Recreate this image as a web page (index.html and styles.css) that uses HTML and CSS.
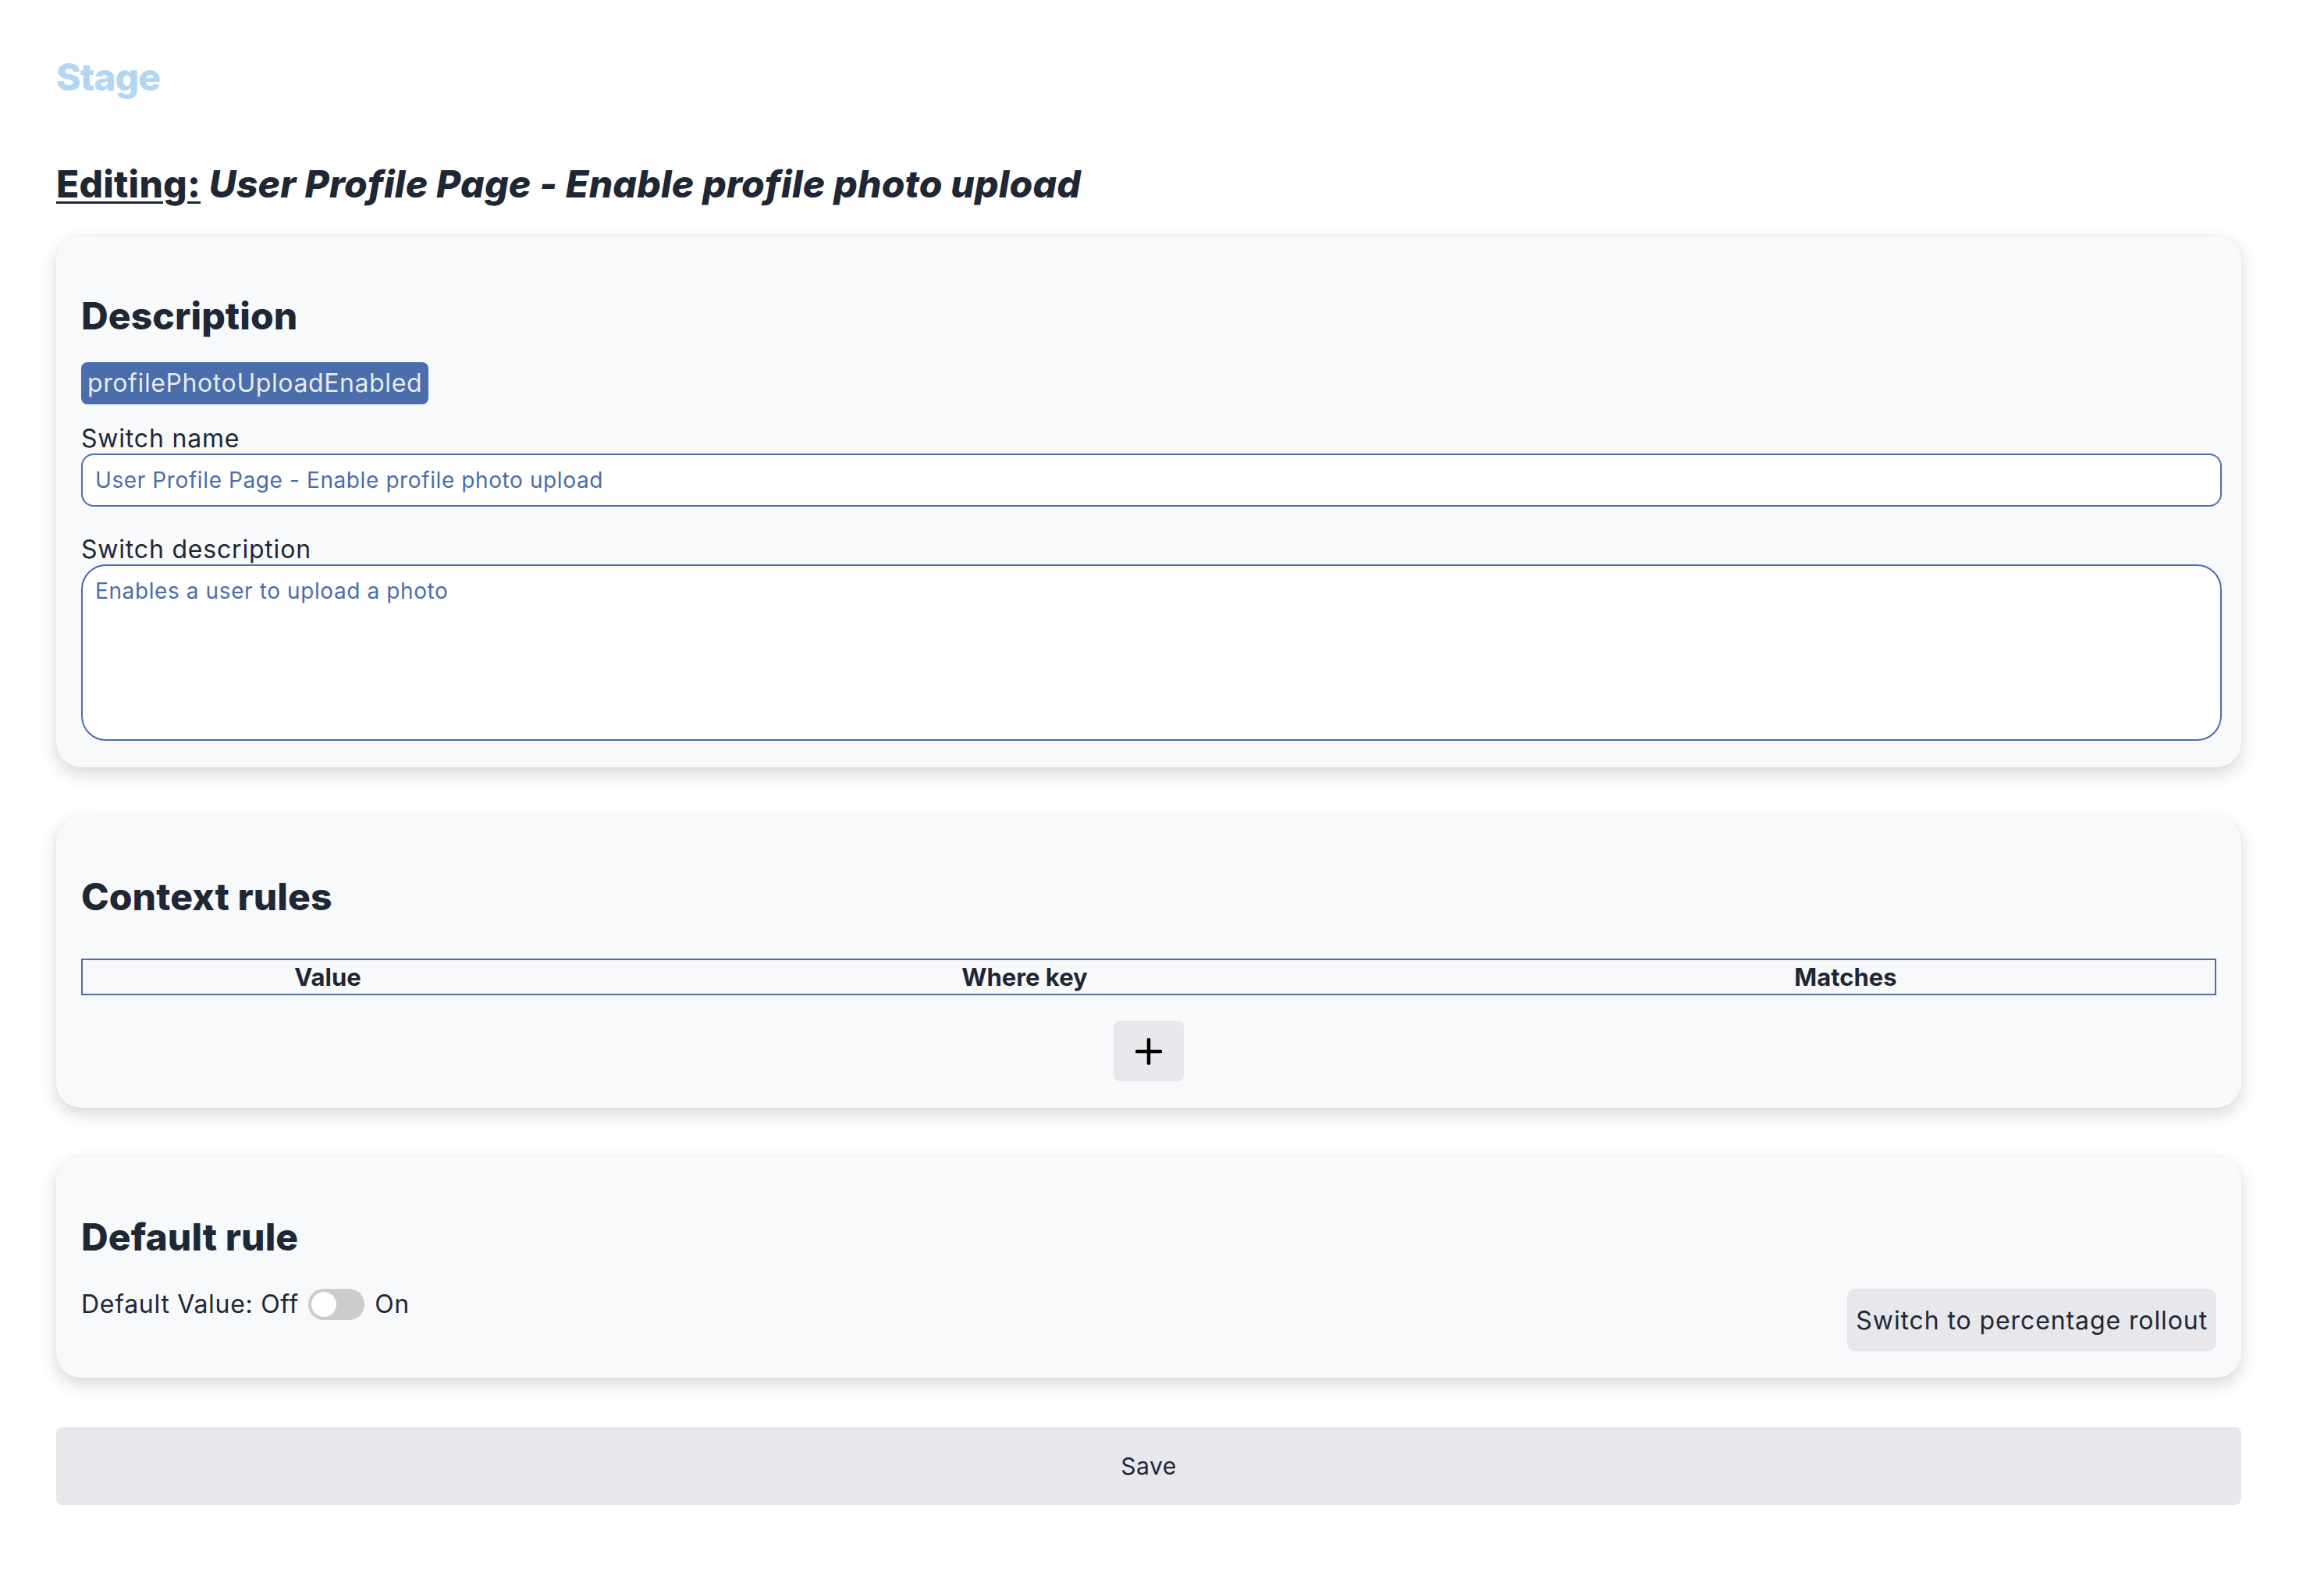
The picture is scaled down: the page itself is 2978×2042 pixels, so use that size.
FILE: index.html
```html
<!DOCTYPE html>
<html lang="en">
<head>
<meta charset="utf-8">
<title>Stage - Editing</title>
<link rel="stylesheet" href="styles.css">
</head>
<body>
<div class="page">
  <header class="brand">Stage</header>
  <h1 class="title"><span class="title-label">Editing:</span> <em>User Profile Page - Enable profile photo upload</em></h1>

  <section class="card">
    <h2 class="card-title">Description</h2>
    <span class="badge">profilePhotoUploadEnabled</span>
    <label class="field-label">Switch name</label>
    <div class="input">User Profile Page - Enable profile photo upload</div>
    <label class="field-label gap-top">Switch description</label>
    <div class="textarea">Enables a user to upload a photo</div>
  </section>

  <section class="card">
    <h2 class="card-title">Context rules</h2>
    <table class="rules">
      <thead>
        <tr>
          <th class="col-value">Value</th>
          <th class="col-key">Where key</th>
          <th class="col-match">Matches</th>
        </tr>
      </thead>
    </table>
    <div class="add-row">
      <button class="add-btn" type="button">
        <svg width="34" height="34" viewBox="0 0 34 34"><path d="M17 2V32M2 17H32" stroke="#000" stroke-width="4.5" stroke-linecap="round" fill="none"/></svg>
      </button>
    </div>
  </section>

  <section class="card">
    <h2 class="card-title">Default rule</h2>
    <div class="default-row">
      <div class="default-value">
        <span>Default Value: Off</span>
        <span class="toggle"><span class="knob"></span></span>
        <span>On</span>
      </div>
      <button class="btn" type="button">Switch to percentage rollout</button>
    </div>
  </section>

  <button class="save" type="button">Save</button>
</div>
</body>
</html>
```

FILE: styles.css
```css
html, body {
  margin: 0;
  padding: 0;
  background: #ffffff;
}
body {
  font-family: "Inter", "Liberation Sans", sans-serif;
  color: #1e2736;
}
.page {
  width: 2800px;
  margin-left: 72px;
  padding-top: 70px;
  padding-bottom: 100px;
}
.brand {
  font-size: 48px;
  line-height: 58px;
  font-weight: 800;
  color: #b3d6f5;
  letter-spacing: -1px;
}
.title {
  margin: 79px 0 37px;
  font-size: 48px;
  line-height: 58px;
  font-weight: 800;
  letter-spacing: 0.2px;
}
.title-label {
  text-decoration: underline;
  text-decoration-thickness: 3px;
  text-underline-offset: 5px;
}
.title em {
  font-style: italic;
}
.card {
  background: #f8f9fb;
  border-radius: 32px;
  box-shadow: 0 8px 22px rgba(0, 0, 0, 0.16), 0 0 4px rgba(0, 0, 0, 0.03);
  padding: 32px 32px 34px;
  margin-bottom: 63px;
  display: flex;
  flex-direction: column;
  align-items: flex-start;
}
.card-title {
  margin: 42px 0 30px;
  font-size: 48px;
  line-height: 58px;
  font-weight: 800;
  letter-spacing: 0.1px;
}
.badge {
  display: inline-block;
  background: #4a6dab;
  color: #e8eaf0;
  font-size: 32px;
  line-height: 54px;
  padding: 0 8px;
  border-radius: 8px;
  margin-bottom: 24px;
  letter-spacing: 0.6px;
}
.field-label {
  font-size: 32px;
  line-height: 39px;
  letter-spacing: 0.8px;
}
.gap-top {
  margin-top: 35px;
}
.input, .textarea {
  box-sizing: border-box;
  width: 2743px;
  border: 2px solid #4a6dab;
  background: #ffffff;
  color: #4a6dab;
  font-size: 28px;
  line-height: 34px;
  letter-spacing: 0.6px;
}
.input {
  height: 68px;
  border-radius: 16px;
  padding: 15px 16px;
}
.textarea {
  height: 226px;
  border-radius: 32px;
  padding: 15px 16px;
}
.rules {
  width: 100%;
  margin-top: 20px;
  border-collapse: collapse;
  border: 2px solid #4a6dab;
}
.rules th {
  font-size: 31px;
  line-height: 43px;
  font-weight: 700;
  padding: 0;
  text-align: center;
}
.col-value { width: 628px; }
.col-key { width: 1158px; }
.add-row {
  align-self: stretch;
  display: flex;
  justify-content: center;
  margin-top: 33px;
}
.add-btn {
  width: 90px;
  height: 77px;
  border: none;
  border-radius: 8px;
  background: #e8e8ec;
  display: flex;
  align-items: center;
  justify-content: center;
  padding: 0;
}
.card-title + .default-row {
  margin-top: 7px;
}
.default-row {
  align-self: stretch;
  display: flex;
  justify-content: space-between;
  align-items: flex-start;
}
.default-value {
  display: flex;
  align-items: center;
  font-size: 32px;
  line-height: 40px;
  letter-spacing: 0.7px;
}
.toggle {
  position: relative;
  display: inline-block;
  width: 72px;
  height: 40px;
  border-radius: 20px;
  background: #cccccc;
  margin: 0 13px 0 12px;
}
.knob {
  position: absolute;
  left: 4px;
  top: 4px;
  width: 32px;
  height: 32px;
  border-radius: 50%;
  background: #ffffff;
}
.btn {
  font-family: inherit;
  font-size: 32px;
  color: #1e2736;
  background: #e8e8ec;
  border: none;
  border-radius: 10px;
  height: 80px;
  padding: 0 11px;
  letter-spacing: 0.9px;
}
.save {
  display: block;
  width: 100%;
  height: 100px;
  border: none;
  border-radius: 8px;
  background: #e8e8ec;
  font-family: inherit;
  font-size: 30px;
  color: #1e2736;
  letter-spacing: 0.5px;
}
```
